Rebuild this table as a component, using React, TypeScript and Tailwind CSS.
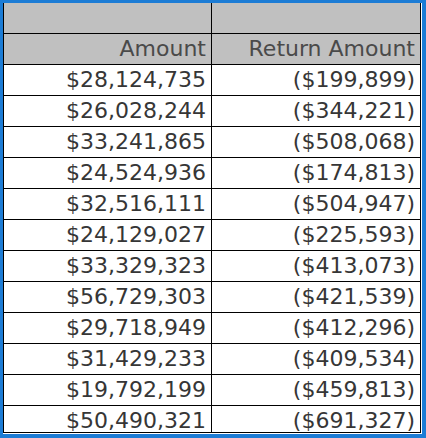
import React from 'react'

const rows = [
  ['$28,124,735', '($199,899)'],
  ['$26,028,244', '($344,221)'],
  ['$33,241,865', '($508,068)'],
  ['$24,524,936', '($174,813)'],
  ['$32,516,111', '($504,947)'],
  ['$24,129,027', '($225,593)'],
  ['$33,329,323', '($413,073)'],
  ['$56,729,303', '($421,539)'],
  ['$29,718,949', '($412,296)'],
  ['$31,429,233', '($409,534)'],
  ['$19,792,199', '($459,813)'],
  ['$50,490,321', '($691,327)'],
]

const Row = ({ a, b, head }: { a: string; b: string; head?: boolean }) => (
  <div
    className={`flex h-[31px] shrink-0 border-b border-black ${
      head ? 'bg-[#c0c0c0] text-[#4a4a4a]' : 'bg-white text-[#363636]'
    }`}
  >
    <div className="flex w-[208px] items-center justify-end border-r border-black pr-[5px] leading-none">{a}</div>
    <div className="flex flex-1 items-center justify-end pr-[5px] leading-none">{b}</div>
  </div>
)

export default function App() {
  return (
    <div className="h-[438px] w-[426px] border-t-[3px] border-r-[4px] border-b-[4px] border-l-[3px] border-[#1c7cd5] bg-white pr-px pb-px">
      <div className="flex h-full flex-col overflow-hidden border-r border-b border-l border-black font-['DejaVu_Sans',Verdana,sans-serif] text-[22px]">
        <Row a="" b="" head />
        <Row a="Amount" b="Return Amount" head />
        {rows.map(([a, b], i) => (
          <Row key={i} a={a} b={b} />
        ))}
      </div>
    </div>
  )
}
